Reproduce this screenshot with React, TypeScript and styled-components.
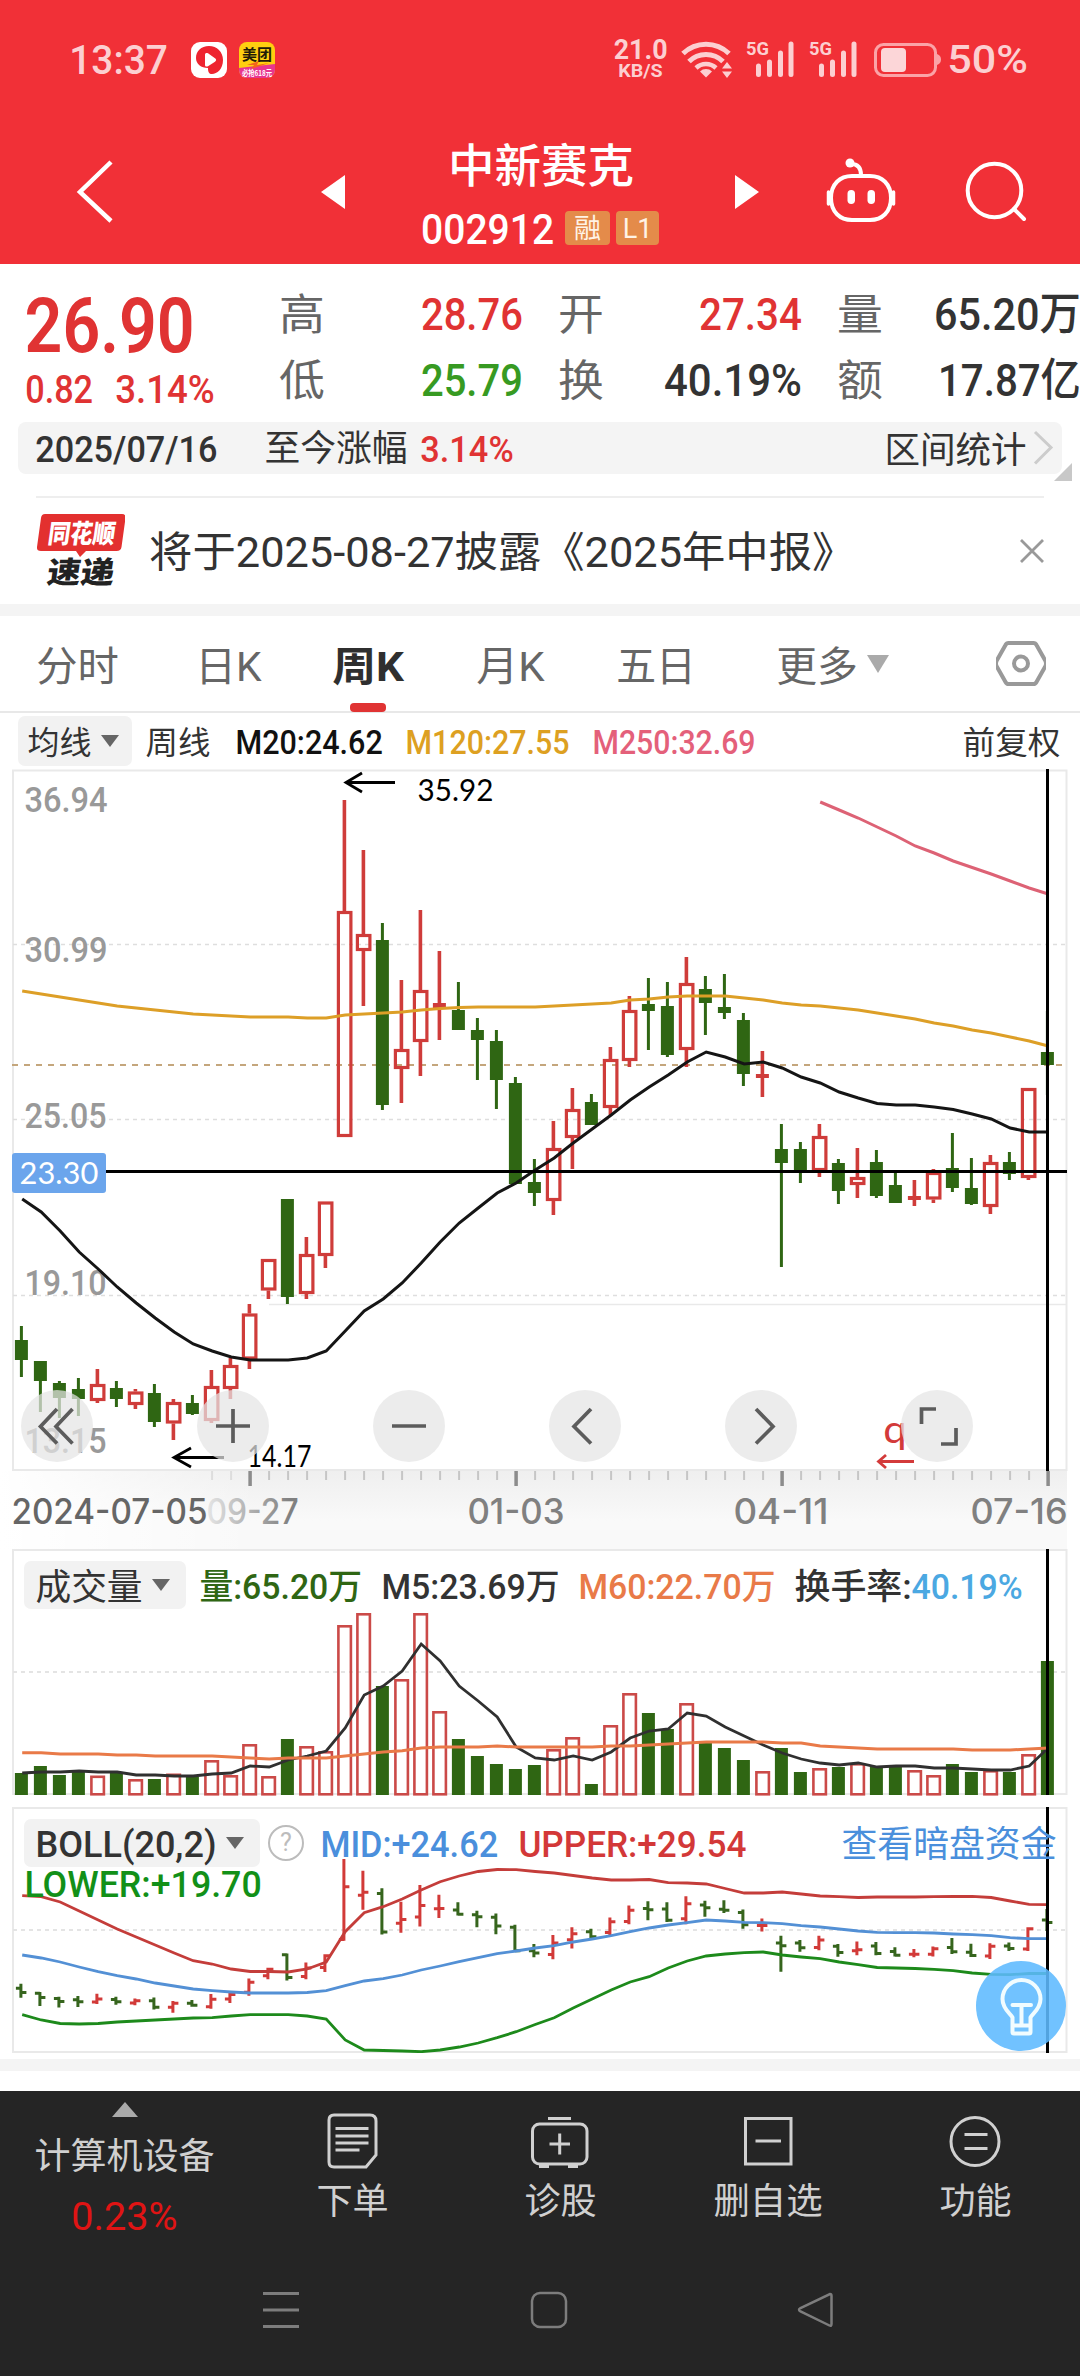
import React, { useLayoutEffect, useRef, useState } from 'react';
import styled, { createGlobalStyle } from 'styled-components';

const SANS = 'Roboto, "Noto Sans CJK SC", sans-serif';
const RED = '#e03333';
const GREEN = '#2f6613';
const CANDLE_RED = '#cf3c3a';

const Global = createGlobalStyle`
  * { box-sizing: border-box; }
  body { margin: 0; background: #fff; font-family: ${SANS}; color: #333; }
  svg { display: block; flex-shrink: 0; }
`;

/* ---------- text fitted to a column width ---------- */

const FitBox = styled.span<{ $w: number; $ml: number; $size: number; $color: string; $weight: number; $font: string; $lh: number }>`
  display: block;
  flex-shrink: 0;
  width: ${p => p.$w}px;
  margin-left: ${p => p.$ml}px;
  font: ${p => p.$weight} ${p => p.$size}px/${p => p.$lh}px ${p => p.$font};
  color: ${p => p.$color};
  white-space: nowrap;
`;
const FitInner = styled.span`
  display: inline-block;
  white-space: pre;
  transform-origin: 0 50%;
`;

type FitProps = { children: string; w: number; size: number; ml?: number; dy?: number; color?: string; weight?: number; font?: string; lh?: number };

function Fit({ children, w, size, ml = 0, dy = 1.5, color = 'inherit', weight = 400, font = SANS, lh }: FitProps) {
  const ref = useRef<HTMLSpanElement>(null);
  const [scale, setScale] = useState(1);
  const bearing = size * 0.045;
  useLayoutEffect(() => {
    if (ref.current) setScale((w + bearing * 2) / ref.current.offsetWidth);
  }, [w, bearing, children]);
  return (
    <FitBox $w={w} $ml={ml} $size={size} $color={color} $weight={weight} $font={font} $lh={lh ?? Math.round(size * 1.1)}>
      <FitInner ref={ref} style={{ transform: `translate(${-bearing}px, ${dy}px) scaleX(${scale})` }}>{children}</FitInner>
    </FitBox>
  );
}

/* ---------- drawing helper ---------- */

const Svg = styled.svg<{ $ml?: number }>`
  margin-left: ${p => p.$ml ?? 0}px;
`;
function Art({ x, y, w, h, ml, children }: { x: number; y: number; w: number; h: number; ml?: number; children: React.ReactNode }) {
  return <Svg $ml={ml} width={w} height={h} viewBox={`${x} ${y} ${w} ${h}`} fill="none">{children}</Svg>;
}

/* ---------- header ---------- */

const Page = styled.div`
  width: 1080px;
  height: 2376px;
  display: flex;
  flex-direction: column;
  overflow: hidden;
`;
const Header = styled.header`
  height: 264px;
  background: #f13037;
  color: #fff;
`;
const StatusBar = styled.div`
  height: 120px;
  display: flex;
  align-items: center;
  color: #fccfd1;
`;
const Speed = styled.div`
  width: 51px;
  margin-left: 340px;
`;
const NavBar = styled.div`
  height: 144px;
  display: flex;
  align-items: center;
`;
const TitleColumn = styled.div`
  width: 236px;
  margin-left: 78px;
  display: flex;
  flex-direction: column;
  align-items: center;
  gap: 16px;
`;
const CodeRow = styled.div`
  width: 236px;
  height: 40px;
  display: flex;
  align-items: center;
`;
const Badge = styled.span<{ $w: number; $ml: number }>`
  width: ${p => p.$w}px;
  height: 34px;
  margin-left: ${p => p.$ml}px;
  border-radius: 4px;
  background: #e48b4a;
  font-size: 27px;
  line-height: 36px;
  text-align: center;
  color: #fff3e6;
`;

function Signal({ x, ml }: { x: number; ml: number }) {
  return (
    <Art x={x} y={36} w={50} h={48} ml={ml}>
      <text x={x} y={55} fontFamily="Roboto" fontWeight={700} fontSize={19} textLength={23} lengthAdjust="spacingAndGlyphs" fill="#fccfd1">5G</text>
      <g stroke="#fccfd1" strokeWidth={5} strokeLinecap="round">
        <path d={`M${x + 12.5} 66V74.5M${x + 23.5} 62V74.5M${x + 34.5} 53V74.5M${x + 45} 44V74.5`} />
      </g>
    </Art>
  );
}

function Top() {
  return (
    <Header>
      <StatusBar>
        <Fit w={95} ml={71} dy={0} size={41} weight={500}>13:37</Fit>
        <Art x={191} y={36} w={36} h={48} ml={25}>
          <rect x={191} y={42} width={36} height={36} rx={9} fill="#fff" />
          <path d="M209 46c8 0 14 6 14 14 0 9-6 14-11 14-3 0-4-2-4-6-7 0-12-4-12-10 0-7 5-12 13-12z" fill="#ee2430" />
          <path d="M205 54.500c0-1.500 1.500-2 3-1.200l7 5c1.500 1 1.500 2.400 0 3.400l-7 4.500c-1.500.8-3 .3-3-1.200z" fill="#fff" />
        </Art>
        <Art x={239} y={36} w={36} h={48} ml={12}>
          <clipPath id="meituan"><rect x={239} y={42} width={36} height={36} rx={8} /></clipPath>
          <g clipPath="url(#meituan)">
            <rect x={239} y={42} width={36} height={36} fill="#ffcf10" />
            <path d="M239 68L275 64V78H239z" fill="#e8368f" />
            <path d="M247 65l12-4-2 4 12-2-18 6 3-4z" fill="#f4661b" />
          </g>
          <text x={242} y={59.500} fontFamily="Noto Sans CJK SC" fontWeight={700} fontSize={15} textLength={30} fill="#221a08">美团</text>
          <text x={242} y={76} fontFamily="Noto Sans CJK SC" fontWeight={700} fontSize={8} textLength={30} lengthAdjust="spacingAndGlyphs" fill="#fff">必抢618元</text>
        </Art>
        <Speed>
          <Fit w={51} dy={-1} size={28} weight={700} lh={26}>21.0</Fit>
          <Fit w={43} ml={4} dy={-2} size={18.500} weight={700} lh={19}>KB/S</Fit>
        </Speed>
        <Art x={681} y={36} w={52} h={48} ml={15}>
          <g stroke="#fccfd1" strokeWidth={5}>
            <path d="M683 53.500a33 33 0 0 1 46 0" />
            <path d="M689 61.500a24 24 0 0 1 34 0" />
            <path d="M696 68a14.500 14.500 0 0 1 20 0" strokeWidth={4.500} />
          </g>
          <path d="M700 71.500a8.500 8.500 0 0 1 12 0l-6 6z" fill="#fccfd1" />
          <path d="M722 68.500l5-6.500 5 6.500zM722 71.500l5 6.500 5-6.500z" fill="#fccfd1" />
        </Art>
        <Signal x={746} ml={13} />
        <Signal x={809} ml={13} />
        <Art x={874} y={36} w={67} h={48} ml={15}>
          <rect x={875.500} y={44.500} width={60} height={31} rx={8} stroke="#fba3a7" strokeWidth={3} />
          <rect x={881} y={48} width={25} height={24} rx={4} fill="#fcd6d8" />
          <path d="M937 54c3 1 4 3 4 5.500s-1 4.500-4 5.500z" fill="#fba3a7" />
        </Art>
        <Fit w={77} ml={8} dy={0} size={38} weight={500}>50%</Fit>
      </StatusBar>
      <NavBar>
        <Art x={70} y={150} w={50} h={80} ml={70}>
          <path d="M111 160L80 190l31 29" stroke="#fff" strokeWidth={4.500} />
        </Art>
        <Art x={321} y={172} w={24} h={40} ml={201}><path d="M345 175v34l-24-17z" fill="#fff" /></Art>
        <TitleColumn>
          <Fit w={182} size={46} weight={500} lh={56}>中新赛克</Fit>
          <CodeRow>
            <Fit w={129} size={42} weight={500}>002912</Fit>
            <Badge $w={45} $ml={13}>融</Badge>
            <Badge $w={43} $ml={6}>L1</Badge>
          </CodeRow>
        </TitleColumn>
        <Art x={735} y={172} w={24} h={40} ml={76}><path d="M735 175v34l24-17z" fill="#fff" /></Art>
        <Art x={824} y={152} w={74} h={80} ml={65}>
          <g stroke="#fff" strokeWidth={4} strokeLinecap="round">
            <path d="M861 175c0-7-3-11-10-11" />
            <path d="M852 176h18c12 0 21 8 21 22s-9 22-21 22h-18c-12 0-21-8-21-22s9-22 21-22z" />
            <path d="M828.500 192v12M893.500 192v12" strokeWidth={3.500} />
          </g>
          <circle cx={850} cy={163} r={4.500} fill="#fff" />
          <rect x={847.500} y={190} width={7.500} height={14} rx={3.700} fill="#fff" />
          <rect x={867.500} y={190} width={7.500} height={14} rx={3.700} fill="#fff" />
        </Art>
        <Art x={964} y={156} w={64} h={72} ml={66}>
          <circle cx={994.500} cy={190.500} r={26.800} stroke="#fff" strokeWidth={4} />
          <path d="M1014 209l10 10" stroke="#fff" strokeWidth={4} strokeLinecap="round" />
        </Art>
      </NavBar>
    </Header>
  );
}

/* ---------- quote ---------- */

const Quote = styled.section`
  height: 158px;
  display: flex;
`;
const PriceBlock = styled.div`
  width: 280px;
  padding: 20px 0 0 27px;
`;
const ChangeRow = styled.div`
  display: flex;
`;
const Stats = styled.div`
  padding-top: 17px;
  display: grid;
  grid-template-columns: 241px 241px 241px;
  grid-auto-rows: 66px;
  column-gap: 38px;
`;
const StatCell = styled.div`
  display: flex;
  align-items: center;
  justify-content: space-between;
`;
const stats: [string, string, number, string][] = [
  ['高', '28.76', 98, RED], ['开', '27.34', 99, RED], ['量', '65.20万', 143, '#333'],
  ['低', '25.79', 98, '#379a22'], ['换', '40.19%', 134, '#333'], ['额', '17.87亿', 139, '#333'],
];
const RangeBar = styled.div`
  width: 1044px;
  height: 52px;
  margin-left: 18px;
  border-radius: 8px;
  background: #f4f4f4;
  display: flex;
  align-items: center;
`;
const CornerRow = styled.div`
  height: 33px;
  margin-top: -11px;
  display: flex;
`;
const Notice = styled.section`
  height: 108px;
  margin: 0 36px;
  border-top: 2px solid #eee;
  display: flex;
  align-items: center;
`;
const Logo = styled.div`
  width: 89px;
  height: 78px;
  margin-bottom: 1px;
`;
const Band = styled.div<{ $mb: number }>`
  height: 12px;
  margin-bottom: ${p => p.$mb}px;
  background: #f4f4f4;
`;

function QuoteArea() {
  return (
    <>
      <Quote>
        <PriceBlock>
          <Fit w={163} ml={1} size={76} weight={600} color={RED} lh={80}>26.90</Fit>
          <ChangeRow>
            <Fit w={64} size={39} weight={500} color={RED} lh={48}>0.82</Fit>
            <Fit w={96} ml={26} size={39} weight={500} color={RED} lh={48}>3.14%</Fit>
          </ChangeRow>
        </PriceBlock>
        <Stats>
          {stats.map(([k, v, w, c]) => (
            <StatCell key={k}>
              <Fit w={42} ml={1} dy={1} size={43} color="#666">{k}</Fit>
              <Fit w={w} dy={1} size={45} weight={500} color={c}>{v}</Fit>
            </StatCell>
          ))}
        </Stats>
      </Quote>
      <RangeBar>
        <Fit w={179} ml={19} dy={1} size={37.500} weight={500}>2025/07/16</Fit>
        <Fit w={140} ml={50} dy={1} size={36}>至今涨幅</Fit>
        <Fit w={90} ml={16} dy={1} size={37.500} weight={500} color={RED}>3.14%</Fit>
        <Fit w={139} ml={374} dy={2.500} size={36}>区间统计</Fit>
        <Art x={1032} y={430} w={24} h={40} ml={6}><path d="M1036 434l16 15.500-16 16" stroke="#ccc" strokeWidth={3} /></Art>
      </RangeBar>
      <CornerRow>
        <Art x={1054} y={463} w={18} h={18} ml={1054}><path d="M1072 463v18h-18z" fill="#c8c8c8" /></Art>
      </CornerRow>
      <Notice>
        <Logo>
          <Art x={36} y={512} w={89} h={78}>
            <path d="M45 514h77q4 0 3.500 4l-4 29q-.5 4-5 4H86l-6 6-4-6H41q-4.500 0-4-4l4-29q.5-4 4-4z" fill="#e3302f" />
            <g fontFamily="Noto Sans CJK SC" fontWeight={900}>
              <text transform="translate(47 543) skewX(-8)" fontSize={26} textLength={67} lengthAdjust="spacingAndGlyphs" fill="#fff">同花顺</text>
              <text transform="translate(46 583) skewX(-8)" fontSize={30} textLength={67} lengthAdjust="spacingAndGlyphs" fill="#222">速递</text>
            </g>
          </Art>
        </Logo>
        <Fit w={702} ml={26} size={42}>将于2025-08-27披露《2025年中报》</Fit>
        <Art x={1018} y={536} w={28} h={30} ml={165}><path d="M1021 540l22 22M1043 540l-22 22" stroke="#999" strokeWidth={2.800} /></Art>
      </Notice>
      <Band $mb={0} />
    </>
  );
}

/* ---------- period tabs ---------- */

const Tabs = styled.nav`
  height: 97px;
  border-bottom: 2px solid #e8e8e8;
  display: flex;
  color: #666;
`;
const Tab = styled.div<{ $ml: number }>`
  margin-left: ${p => p.$ml}px;
  height: 96px;
  padding-top: 28px;
  display: flex;
  flex-direction: column;
  align-items: center;
  justify-content: space-between;
`;
const GearTab = styled(Tab)`
  padding-top: 24px;
`;
const Underline = styled.i`
  width: 36px;
  height: 9px;
  border-radius: 4px;
  background: ${RED};
`;
const MaRow = styled.div`
  height: 56px;
  display: flex;
  align-items: center;
`;
const Picker = styled.div<{ $w: number; $h: number; $ml: number; $pl: number }>`
  width: ${p => p.$w}px;
  height: ${p => p.$h}px;
  margin-left: ${p => p.$ml}px;
  padding-left: ${p => p.$pl}px;
  flex-shrink: 0;
  border-radius: 7px;
  background: #f2f2f2;
  display: flex;
  align-items: center;
`;
const Caret = () => <Art x={0} y={0} w={18} h={12} ml={11}><path d="M0 0h18l-9 12z" fill="#666" /></Art>;

const tabs: [string, number, number][] = [['分时', 38, 79], ['日K', 80, 63], ['周K', 74, 68], ['月K', 76, 65], ['五日', 75, 76], ['更多', 84, 78]];

function Periods() {
  return (
    <>
      <Tabs>
        {tabs.map(([t, ml, w]) => (
          <Tab key={t} $ml={ml}>
            <Fit w={w} dy={1} size={41} weight={t === '周K' ? 700 : 400} color={t === '周K' ? '#2f2f2f' : '#666'}>{t}</Fit>
            {t === '周K' && <Underline />}
          </Tab>
        ))}
        <Tab $ml={11}>
          <Art x={866} y={644} w={24} h={44}><path d="M866 655h22l-11 18z" fill="#aaa" /></Art>
        </Tab>
        <GearTab $ml={105}>
          <Art x={995} y={640} w={50} h={48}>
            <path d="M1007.500 643h25q2 0 3 2l9 16q1 2.500 0 5l-9 16q-1 2-3 2h-25q-2 0-3-2l-9-16q-1-2.500 0-5l9-16q1-2 3-2z" stroke="#999" strokeWidth={4} />
            <circle cx={1020} cy={663.500} r={7} stroke="#999" strokeWidth={4} />
          </Art>
        </GearTab>
      </Tabs>
      <MaRow>
        <Picker $w={114} $h={50} $ml={18} $pl={11}>
          <Fit w={61} dy={2} size={32}>均线</Fit>
          <Caret />
        </Picker>
        <Fit w={62} ml={15} dy={2} size={32}>周线</Fit>
        <Fit w={144} ml={28} dy={2} size={33} weight={500} color="#111">M20:24.62</Fit>
        <Fit w={161} ml={26} dy={2} size={33} weight={500} color="#dda021">M120:27.55</Fit>
        <Fit w={160} ml={26} dy={2} size={33} weight={500} color="#e4607a">M250:32.69</Fit>
        <Fit w={95} ml={210} dy={2} size={32}>前复权</Fit>
      </MaRow>
    </>
  );
}

/* ---------- chart data (screen-space series, one step per week) ---------- */

const xAt = (i: number) => 21.4 + i * 19;

// direction (1 = up), high, body top, body bottom, low
const candles: number[][] = [
  [0, 1326, 1340, 1360, 1377], [0, 1361, 1361, 1381, 1412], [0, 1381, 1383, 1398, 1418], [0, 1378, 1389, 1399, 1416],
  [1, 1369, 1384, 1401, 1403], [0, 1381, 1388, 1399, 1407], [1, 1389, 1391.5, 1405, 1409], [0, 1384, 1393, 1422, 1427],
  [1, 1399, 1402, 1423.5, 1440], [0, 1395, 1403, 1414, 1415], [1, 1370, 1386, 1421, 1423], [1, 1358, 1365, 1389, 1399],
  [1, 1304, 1313.5, 1359.5, 1369], [1, 1259, 1259, 1290.5, 1299], [0, 1199, 1199, 1297, 1304], [1, 1237, 1254, 1294, 1299],
  [1, 1201.5, 1201.5, 1256, 1268], [1, 800, 911, 1137, 1137], [1, 850, 934, 951, 1006], [0, 923, 940, 1105, 1110],
  [1, 980, 1049, 1069, 1103], [1, 910, 990, 1042, 1076], [1, 951, 1003, 1008, 1040], [0, 982, 1010, 1030, 1030],
  [0, 1018, 1030, 1040, 1080], [0, 1030, 1041, 1080, 1109], [0, 1077, 1083, 1184, 1184], [0, 1159, 1182, 1193, 1206],
  [1, 1121, 1148, 1201, 1215], [1, 1088, 1109, 1138, 1169], [0, 1094, 1102, 1125, 1125], [1, 1047, 1059, 1108, 1115],
  [1, 996, 1010, 1061, 1067], [0, 978, 1004, 1011, 1050], [0, 982, 1006, 1055, 1057], [1, 957, 983, 1050, 1067],
  [0, 976, 989, 1003, 1035], [0, 974, 1007, 1013, 1019], [0, 1013, 1020, 1074, 1086], [1, 1051, 1074, 1078, 1097],
  [0, 1124, 1149, 1163, 1267], [0, 1142, 1149, 1171, 1183], [1, 1124, 1136, 1171, 1177], [0, 1159, 1163, 1191, 1204],
  [1, 1148, 1177, 1185, 1198], [0, 1150, 1162, 1196, 1198], [0, 1172, 1185, 1203, 1203], [1, 1180, 1196, 1200, 1206],
  [1, 1169, 1172, 1199.5, 1203], [0, 1133, 1168, 1188, 1192], [0, 1158, 1188, 1204, 1205], [1, 1155, 1162, 1207, 1214],
  [0, 1152, 1162, 1174, 1180], [1, 1088, 1088, 1178, 1180], [0, 1011, 1052, 1065, 1095],
];
const volumes = [1773, 1766, 1775, 1771, 1775.5, 1773, 1779, 1779, 1773.5, 1777, 1760, 1775, 1744, 1776, 1739, 1746, 1751, 1625, 1613, 1686, 1679, 1613, 1711, 1739, 1756, 1764, 1769, 1765, 1749, 1737, 1784, 1725, 1693, 1713, 1729, 1703, 1743, 1748, 1760, 1771, 1748, 1772, 1768, 1767, 1763, 1767, 1767, 1770, 1775, 1764, 1772, 1770, 1772, 1754, 1661];
const ma20 = [1199, 1212, 1231, 1252, 1269, 1287, 1303, 1318, 1332, 1344, 1351, 1357, 1360, 1360, 1360, 1358, 1351, 1331, 1311, 1299, 1283, 1263, 1242, 1223, 1208, 1193, 1183, 1170, 1158, 1143, 1129, 1115, 1100, 1087, 1075, 1062, 1052, 1057, 1064, 1062, 1068, 1077, 1083, 1092, 1098, 1103.5, 1105, 1105, 1107, 1109.5, 1114, 1119, 1128, 1132, 1132];
const ma120 = [991, 994, 997, 1000, 1003, 1006, 1008, 1010, 1012, 1014, 1015, 1016, 1017, 1017, 1017, 1018, 1018, 1015, 1014, 1013, 1012, 1010, 1008.500, 1007.500, 1007, 1007, 1007, 1007, 1006, 1005, 1004, 1003, 1000, 999, 997, 996, 996, 996, 998, 1000, 1003, 1005, 1006, 1008, 1010, 1013, 1016, 1019, 1023, 1026, 1030, 1033, 1037, 1041, 1046];
const ma250 = [802, 810, 818, 827, 836, 846, 853, 861, 867.5, 874, 881, 888, 894];
const vol5 = [1773, 1772, 1772, 1771, 1772, 1772, 1775, 1775, 1776, 1776, 1774, 1773, 1766, 1767, 1760, 1756, 1751, 1728, 1695, 1686, 1671, 1644, 1661, 1686, 1701, 1717, 1747, 1758, 1760, 1756, 1760, 1752, 1738, 1731, 1729, 1713, 1716, 1727, 1736, 1745, 1753, 1759, 1763, 1765, 1763, 1767, 1766, 1766, 1768, 1768, 1769, 1770, 1770, 1766, 1748];
const vol60 = [1752.7, 1752.7, 1754, 1754, 1754, 1755, 1755, 1756, 1756, 1756, 1756, 1757, 1758, 1759, 1758, 1758, 1758, 1756, 1754, 1752, 1750.7, 1748, 1747, 1747, 1747, 1746, 1747, 1747, 1747, 1747, 1747, 1746, 1746, 1745, 1744, 1743, 1742, 1742, 1742, 1742, 1743, 1743, 1746, 1747, 1748, 1749, 1749, 1749, 1749, 1749, 1750, 1750, 1750, 1749, 1748];
const upper = [1895.7, 1896.7, 1902, 1911, 1920, 1929, 1937, 1945, 1953, 1960.7, 1964, 1969, 1971.5, 1971.5, 1972, 1969, 1962, 1931.7, 1912.7, 1906.7, 1899, 1890, 1881.7, 1876, 1871.5, 1869.5, 1869.7, 1871.5, 1873, 1875.5, 1878, 1880, 1880, 1879.5, 1882.7, 1883, 1884, 1888.5, 1893, 1893, 1892, 1894, 1896, 1896.7, 1897.5, 1897, 1897, 1897, 1896.7, 1896.5, 1896.3, 1897.5, 1901, 1904.3, 1904.7];
const mid = [1955, 1958, 1962, 1967, 1971.7, 1975.7, 1979, 1983, 1986, 1989, 1990.7, 1992, 1993, 1993, 1993, 1992.5, 1990.7, 1985.7, 1981, 1978.7, 1975, 1970, 1966, 1961.7, 1957.7, 1953.7, 1951, 1948, 1945.7, 1942, 1939, 1935.7, 1931.7, 1928, 1925, 1922.7, 1920, 1921, 1922.3, 1922.7, 1923.7, 1925.7, 1927, 1929, 1931, 1932.3, 1932.7, 1932.7, 1933, 1934, 1934.7, 1935.7, 1937.7, 1938.7, 1938.7];
const lower = [2014.7, 2020, 2023.5, 2024, 2023.5, 2022, 2021, 2020, 2019, 2018, 2017.7, 2016, 2014.7, 2014.7, 2014.7, 2016, 2019, 2040, 2050, 2050.5, 2051, 2051.7, 2050, 2047, 2043, 2037.7, 2031.7, 2024.5, 2017.7, 2008, 1999, 1990, 1982, 1976.7, 1968, 1961, 1956, 1954, 1952.7, 1952, 1955, 1957, 1958.7, 1962, 1964.7, 1967.5, 1968, 1968.5, 1969.3, 1970.7, 1973, 1974.3, 1974.7, 1973.5, 1973.5];

const line = (ys: number[], from = 0) => 'M' + ys.map((y, i) => `${xAt(i + from) + 0.800} ${y}`).join('L');
const bollY = (y: number) => 1860 + (y - 800) * 0.237;

function Label({ x, y, w, size = 35, color = '#999', weight = 500, font = 'Roboto', children }: { x: number; y: number; w: number; size?: number; color?: string; weight?: number; font?: string; children: string }) {
  return <text x={x - size * 0.045} y={y} fontFamily={font} fontSize={size} fontWeight={weight} fill={color} textLength={w + size * 0.09} lengthAdjust="spacingAndGlyphs">{children}</text>;
}

const Stack = styled.section<{ $h: number; $mb?: number }>`
  height: ${p => p.$h}px;
  margin-bottom: ${p => p.$mb ?? 0}px;
  flex-shrink: 0;
  display: grid;
  > * { grid-area: 1 / 1; }
`;
const Controls = styled.div`
  display: flex;
  align-items: flex-end;
  gap: 104px;
  padding: 0 0 9px 21px;
`;
const RoundButton = styled.div`
  width: 72px;
  height: 72px;
  border-radius: 50%;
  background: rgba(228, 228, 228, 0.72);
  display: flex;
  align-items: center;
  justify-content: center;
`;
const glyphs = [
  'M36 19L19.500 36.500l16.500 17M51.500 19L35 36.500l16.500 17',
  'M19 36h34M36 19v34',
  'M19 36h34',
  'M42 19L25 36.500l17 17',
  'M31 19L48 36.500 31 53.500',
  'M20.5 34V19H35M55 38v16H40',
];

function MainChart() {
  return (
    <Stack $h={702}>
      <Art x={0} y={769} w={1080} h={702}>
        <path d="M13 770.500H1066.500V1470H13z" stroke="#e9e9e9" strokeWidth={2} />
        <path d="M13 944.500H1066M13 1119.500H1066M13 1295.500H1066" stroke="#dedede" strokeWidth={1.300} strokeDasharray="4 4" />
        <path d="M269 1304.500H1067" stroke="#e9e9e9" strokeWidth={1.300} />
        <path d="M12 1065H1066" stroke="#c4a67c" strokeWidth={2} strokeDasharray="6 6" />
        <Label x={26} y={812} w={80}>36.94</Label>
        <Label x={26} y={962} w={80}>30.99</Label>
        <Label x={26} y={1128} w={79}>25.05</Label>
        <Label x={26} y={1295} w={79}>19.10</Label>
        <Label x={26} y={1453} w={79}>13.15</Label>
        {candles.map(([up, hi, top, bot, lo], i) => {
          const x = xAt(i);
          const c = up ? CANDLE_RED : GREEN;
          const hollow = up && bot - top > 6;
          return (
            <g key={i}>
              <path d={`M${x} ${hi}V${top}M${x} ${bot}V${lo}`} stroke={c} strokeWidth={up ? 3.600 : 3} />
              {hollow
                ? <rect x={x - 6} y={top + 1.500} width={12.500} height={bot - top - 3} stroke={c} strokeWidth={3.200} />
                : <rect x={x - 6.500} y={top} width={13} height={bot - top} fill={c} />}
            </g>
          );
        })}
        <path d={line(ma120)} stroke="#dd9f27" strokeWidth={3} />
        <path d={line(ma250, 42)} stroke="#dd6275" strokeWidth={3} />
        <path d={line(ma20)} stroke="#151515" strokeWidth={3} />
        <path d="M395 782.500H346M362 773L346 782.500l16 9.500" stroke="#000" strokeWidth={2.800} />
        <Label x={419} y={801} w={73} size={31} color="#000" weight={400} font="Lato">35.92</Label>
        <path d="M224 1457.500H174M191 1448l-17 9.500 17 9.500" stroke="#000" strokeWidth={2.800} />
        <Label x={249} y={1467} w={61} size={31} color="#000" weight={400} font="Lato">14.17</Label>
        <path d="M12 1171.500H1067M1047.500 769V1471" stroke="#000" strokeWidth={3} />
        <rect x={12} y={1153} width={94} height={40} rx={3} fill="#6ba5ec" />
        <Label x={21} y={1183.500} w={76} size={31} color="#fff" weight={400} font="Lato">23.30</Label>
        <Label x={885} y={1443} w={20} size={38} color="#d33a3a" weight={400} font="Lato">q</Label>
        <path d="M914 1461.500H878M886 1455l-7.500 6.500 7.500 6.500" stroke="#d33a3a" strokeWidth={2.800} />
      </Art>
      <Controls>
        {glyphs.map(d => (
          <RoundButton key={d}>
            <Art x={0} y={0} w={72} h={72}><path d={d} stroke="#5c5c5c" strokeWidth={3.700} /></Art>
          </RoundButton>
        ))}
      </Controls>
    </Stack>
  );
}

const AxisStrip = styled.div`
  height: 78px;
  width: 1067px;
  flex-shrink: 0;
  background: linear-gradient(90deg, #fff 0, rgba(255, 255, 255, 0) 260px), linear-gradient(#efefef, #f9f9f9 50px);
`;

function TimeAxis() {
  return (
    <AxisStrip>
      <Art x={0} y={1471} w={1067} h={78}>
        <defs>
          <linearGradient id="fade" gradientUnits="userSpaceOnUse" x1={206} x2={290} y1={0} y2={0}>
            <stop offset="0" stopColor="#e6e6e6" /><stop offset="1" stopColor="#808080" />
          </linearGradient>
        </defs>
        {candles.map((_, i) => {
          if (i < 10) return null;
          const major = i % 14 === 12;
          return <path key={i} d={`M${xAt(i) + 0.700} 1471v${major ? 15 : 9}`} stroke={major ? '#8c8c8c' : i < 12 ? '#ddd' : '#c6c6c6'} strokeWidth={major ? 3.500 : 2} />;
        })}
        <Label x={208} y={1524} w={89} color="url(#fade)" weight={500} font="Inter">09-27</Label>
        <Label x={13} y={1524} w={193} color="#666" weight={500} font="Inter">2024-07-05</Label>
        <Label x={469} y={1524} w={94} color="#808080" weight={500} font="Inter">01-03</Label>
        <Label x={735} y={1524} w={92} color="#808080" weight={500} font="Inter">04-11</Label>
        <Label x={972} y={1524} w={94} color="#808080" weight={500} font="Inter">07-16</Label>
      </Art>
    </AxisStrip>
  );
}

const Legend = styled.div`
  height: 48px;
  margin-top: 12px;
  display: flex;
  align-items: center;
`;

function VolumeChart() {
  return (
    <Stack $h={247} $mb={11}>
      <Art x={0} y={1549} w={1080} h={247}>
        <path d="M13 1550H1066.500V1794H13z" stroke="#e9e9e9" strokeWidth={2} />
        <path d="M13 1672H1066" stroke="#e4e4e4" strokeWidth={1.800} strokeDasharray="4 4" />
        {volumes.map((y, i) => candles[i][0]
          ? <rect key={i} x={xAt(i) - 6} y={y + 1.300} width={12.500} height={1795 - y - 2} stroke="#cb4a48" strokeWidth={2.600} />
          : <rect key={i} x={xAt(i) - 6.500} y={y} width={13} height={1795 - y} fill={GREEN} />)}
        <path d={line(vol5)} stroke="#303030" strokeWidth={2.800} />
        <path d={line(vol60)} stroke="#e97a48" strokeWidth={3} />
        <path d="M1047.500 1549V1795" stroke="#000" strokeWidth={3} />
      </Art>
      <Legend>
        <Picker $w={162} $h={48} $ml={24} $pl={13}>
          <Fit w={104} dy={2.500} size={36}>成交量</Fit>
          <Caret />
        </Picker>
        <Fit w={160} ml={15} dy={2} size={35} weight={500} color={GREEN}>量:65.20万</Fit>
        <Fit w={175} ml={22} dy={2} size={35} weight={500}>M5:23.69万</Fit>
        <Fit w={194} ml={22} dy={2} size={35} weight={500} color="#e97a48">M60:22.70万</Fit>
        <Fit w={114} ml={22} dy={2} size={35} weight={500}>换手率:</Fit>
        <Fit w={108} ml={3} dy={2} size={35} weight={500} color="#4ba8e2">40.19%</Fit>
      </Legend>
    </Stack>
  );
}

const Help = styled.span`
  width: 36px;
  height: 36px;
  margin-left: 8px;
  flex-shrink: 0;
  border: 2.500px solid #bcbcbc;
  border-radius: 50%;
  color: #bcbcbc;
  font-size: 25px;
  line-height: 32px;
  text-align: center;
`;
const LegendColumn = styled.div`
  display: flex;
  flex-direction: column;
`;
const SecondLine = styled.div`
  padding-left: 26px;
  margin-top: -3px;
`;
const BulbButton = styled.div`
  width: 90px;
  height: 90px;
  margin-right: 14px;
  margin-bottom: 2px;
  border-radius: 50%;
  background: rgba(93, 186, 255, 0.88);
  align-self: end;
  justify-self: end;
`;

function BollChart() {
  return (
    <Stack $h={246} $mb={6}>
      <Art x={0} y={1807} w={1080} h={246}>
        <path d="M13 1808H1066.500V2052H13z" stroke="#e9e9e9" strokeWidth={2} />
        <path d="M13 1930H1066" stroke="#e4e4e4" strokeWidth={1.800} strokeDasharray="4 4" />
        {candles.map(([up, hi, top, bot, lo], i) => {
          const x = xAt(i) - 0.500;
          const open = bollY(up ? bot - 2 : top + 1);
          const close = bollY(up ? top + 2 : bot - 1);
          return <path key={i} d={`M${x} ${bollY(hi) - 1}V${bollY(lo) + 1}M${x - 5} ${open}h5M${x} ${close}h5.500`} stroke={up ? '#d23a38' : '#36651d'} strokeWidth={3} />;
        })}
        <path d={line(upper)} stroke="#c43d3a" strokeWidth={2.800} />
        <path d={line(mid)} stroke="#5390d5" strokeWidth={2.800} />
        <path d={line(lower)} stroke="#1d8a1b" strokeWidth={2.800} />
        <path d="M1047.500 1807V2053" stroke="#000" strokeWidth={3} />
      </Art>
      <LegendColumn>
        <Legend>
          <Picker $w={236} $h={48} $ml={24} $pl={13}>
            <Fit w={178} dy={2} size={36} weight={500}>BOLL(20,2)</Fit>
            <Caret />
          </Picker>
          <Help>?</Help>
          <Fit w={175} ml={18} size={36} weight={500} color="#4a8fdc">MID:+24.62</Fit>
          <Fit w={225} ml={23} size={36} weight={500} color="#d33838">UPPER:+29.54</Fit>
          <Fit w={212} ml={98} dy={2} size={36} color="#4a8fdc">查看暗盘资金</Fit>
        </Legend>
        <SecondLine>
          <Fit w={234} dy={1} size={36} weight={500} color="#129018">LOWER:+19.70</Fit>
        </SecondLine>
      </LegendColumn>
      <BulbButton>
        <Art x={976} y={1961} w={90} h={90}>
          <g stroke="#f1fcff" strokeWidth={4} strokeLinejoin="round" strokeLinecap="round">
            <path d="M1012.500 2032v-14.500c-1-3-10-8-10-18.500a19 19 0 0 1 38 0c0 10.500-9 15.500-10 18.500v14.500q0 1.500-1.500 1.500h-15q-1.500 0-1.500-1.500zM1013 2025.500h17M1012.500 2005h18.500M1021.500 2005v20" />
          </g>
        </Art>
      </BulbButton>
    </Stack>
  );
}

/* ---------- bottom bar ---------- */

const Bottom = styled.footer`
  height: 285px;
  flex-shrink: 0;
  background: #252525;
  color: #d0d0d0;
`;
const Actions = styled.div`
  height: 178px;
  display: flex;
`;
const Sector = styled.div`
  width: 249px;
  padding-top: 11px;
  display: flex;
  flex-direction: column;
  align-items: center;
`;
const Action = styled.div`
  width: 207.500px;
  padding-top: 20px;
  display: flex;
  flex-direction: column;
  align-items: center;
  gap: 10px;
`;
const SystemNav = styled.div`
  height: 80px;
  display: flex;
  align-items: center;
`;

function BottomBar() {
  return (
    <Bottom>
      <Actions>
        <Sector>
          <Art x={112} y={2102} w={26} h={15}><path d="M112 2117h26l-13-15z" fill="#aaa" /></Art>
          <Fit w={177} dy={2.500} size={36} lh={74}>计算机设备</Fit>
          <Fit w={103} size={38} color="#e01414" lh={48}>0.23%</Fit>
        </Sector>
        <Action>
          <Art x={325} y={2111} w={56} h={58}>
            <path d="M334 2115h36q6 0 6 6v34l-10 12h-32q-5 0-5-5v-42q0-5 5-5z" stroke="#d0d0d0" strokeWidth={3} />
            <path d="M335.500 2128.500h33M335.500 2136h33M335.500 2143h33M335.500 2150h24" stroke="#d0d0d0" strokeWidth={3} />
          </Art>
          <Fit w={69} dy={2.500} size={36}>下单</Fit>
        </Action>
        <Action>
          <Art x={531} y={2111} w={58} h={58}>
            <rect x={532.500} y={2124} width={54.500} height={40} rx={7} stroke="#d0d0d0" strokeWidth={3} />
            <path d="M548 2118.500h23M539 2166.500h10M568 2166.500h10M549.500 2144h20.500M559.700 2133.500v21" stroke="#d0d0d0" strokeWidth={3} />
          </Art>
          <Fit w={69} dy={2.500} size={36}>诊股</Fit>
        </Action>
        <Action>
          <Art x={739} y={2111} w={56} h={58}>
            <path d="M744.500 2118.500h45.500v45.500h-45.500zM754.500 2141h25.500" stroke="#d0d0d0" strokeWidth={3} />
          </Art>
          <Fit w={106} dy={2.500} size={36}>删自选</Fit>
        </Action>
        <Action>
          <Art x={947} y={2111} w={56} h={58}>
            <circle cx={975} cy={2141.500} r={24} stroke="#d0d0d0" strokeWidth={3} />
            <path d="M964.500 2134.500h23M964.500 2148.500h23" stroke="#d0d0d0" strokeWidth={3} />
          </Art>
          <Fit w={69} dy={2.500} size={36}>功能</Fit>
        </Action>
      </Actions>
      <SystemNav>
        <Art x={263} y={2285} w={36} h={48} ml={263}><path d="M263 2293.500h36M263 2310h36M263 2326.500h36" stroke="#7d7d7d" strokeWidth={3} /></Art>
        <Art x={530} y={2285} w={38} h={48} ml={231}><rect x={532} y={2293} width={34} height={34} rx={8} stroke="#7d7d7d" strokeWidth={2.500} /></Art>
        <Art x={796} y={2285} w={40} h={48} ml={228}><path d="M830 2294q1.500 0 1.500 2v28q0 2.500-2 1.500l-29-14q-3-1.800 0-3.500z" stroke="#7d7d7d" strokeWidth={2.500} /></Art>
      </SystemNav>
    </Bottom>
  );
}

export default function App() {
  return (
    <Page>
      <Global />
      <Top />
      <QuoteArea />
      <Periods />
      <MainChart />
      <TimeAxis />
      <VolumeChart />
      <BollChart />
      <Band $mb={20} />
      <BottomBar />
    </Page>
  );
}
